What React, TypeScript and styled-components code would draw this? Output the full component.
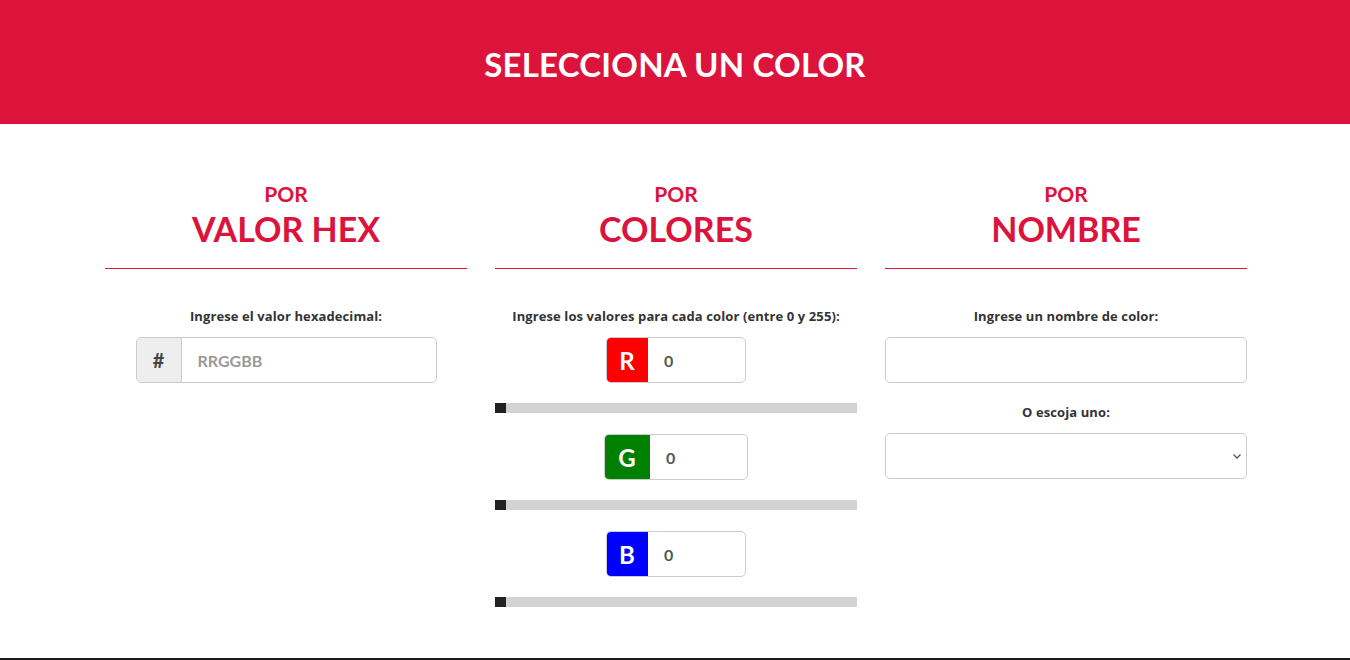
import React from "react";
import styled, { createGlobalStyle } from "styled-components";

const Global = createGlobalStyle`
  html, body { margin: 0; padding: 0; background: #fff; }
  body { font-family: Lato, "Open Sans", sans-serif; }
  * { box-sizing: border-box; }
`;

const CRIMSON = "#dc143c";

const Header = styled.header`
  height: 124px;
  background: ${CRIMSON};
  display: flex;
  align-items: center;
  justify-content: center;
`;

const Title = styled.h1`
  margin: 0;
  color: #fff;
  font-family: Lato, sans-serif;
  font-weight: 700;
  font-size: 33px;
  letter-spacing: 0.2px;
  line-height: 1;
  padding-top: 4px;
`;

const Main = styled.main`
  display: grid;
  grid-template-columns: repeat(3, 362px);
  column-gap: 28px;
  justify-content: center;
  padding: 58px 0 51px 2px;
  align-items: start;
`;

const Column = styled.section`
  display: flex;
  flex-direction: column;
  align-items: center;
`;

const ColumnHead = styled.div`
  width: 100%;
  text-align: center;
  color: ${CRIMSON};
  font-weight: 700;
  border-bottom: 1px solid ${CRIMSON};
  padding-bottom: 19px;
`;

const Small = styled.div`
  font-size: 21px;
  line-height: 24px;
`;

const Big = styled.div`
  font-size: 34px;
  line-height: 40px;
  margin-top: 3px;
`;

const Label = styled.label<{ $top?: number }>`
  display: block;
  margin-top: ${(p) => p.$top ?? 38}px;
  margin-bottom: 12px;
  font-family: "Open Sans", Lato, sans-serif;
  font-size: 13px;
  line-height: 18px;
  font-weight: 700;
  letter-spacing: 0.1px;
  color: #333;
  text-align: center;
`;

const Group = styled.div<{ $width: number }>`
  display: flex;
  width: ${(p) => p.$width}px;
  height: 46px;
  border: 1px solid #ccc;
  border-radius: 5px;
  overflow: hidden;
  background: #fff;
`;

const Addon = styled.span<{ $bg: string; $fg: string; $w: number }>`
  flex: 0 0 ${(p) => p.$w}px;
  display: flex;
  align-items: center;
  justify-content: center;
  background: ${(p) => p.$bg};
  color: ${(p) => p.$fg};
  font-weight: 700;
  font-size: ${(p) => (p.$fg === "#fff" ? 24 : 20)}px;
  border-right: 1px solid ${(p) => (p.$fg === "#fff" ? "transparent" : "#ccc")};
`;

const Field = styled.input`
  flex: 1;
  min-width: 0;
  border: none;
  outline: none;
  padding: 0 16px;
  font-family: Lato, sans-serif;
  font-weight: 700;
  font-size: 16px;
  color: #555;
  background: transparent;
  &::placeholder { color: #999; }
`;

const RgbBlock = styled.div`
  width: 100%;
  display: flex;
  flex-direction: column;
  align-items: center;
`;

const Track = styled.div<{ $mb: number }>`
  width: 100%;
  height: 10px;
  background: #d3d3d3;
  margin-top: 20px;
  margin-bottom: ${(p) => p.$mb}px;
  display: flex;
`;

const Thumb = styled.span`
  width: 11px;
  height: 10px;
  background: #222;
`;

const FullBox = styled.input`
  width: 100%;
  height: 46px;
  border: 1px solid #ccc;
  border-radius: 5px;
  outline: none;
  padding: 0 12px;
  font-family: Lato, sans-serif;
  font-size: 16px;
`;

const SelectWrap = styled.div`
  position: relative;
  width: 100%;
`;

const Select = styled.select`
  width: 100%;
  height: 46px;
  border: 1px solid #ccc;
  border-radius: 5px;
  appearance: none;
  background: #fff;
  outline: none;
  padding: 0 12px;
  font-family: Lato, sans-serif;
  font-size: 16px;
`;

const Chevron = styled.svg`
  position: absolute;
  right: 5px;
  top: 19px;
  pointer-events: none;
`;

const Footer = styled.footer`
  height: 40px;
  background: #1b1b1b;
`;

const channels = [
  { letter: "R", bg: "#ff0000", w: 140, addon: 41 },
  { letter: "G", bg: "#008000", w: 144, addon: 45 },
  { letter: "B", bg: "#0000ff", w: 140, addon: 41 },
];

export default function App() {
  return (
    <>
      <Global />
      <Header>
        <Title>SELECCIONA UN COLOR</Title>
      </Header>
      <Main>
        <Column>
          <ColumnHead>
            <Small>POR</Small>
            <Big>VALOR HEX</Big>
          </ColumnHead>
          <Label>Ingrese el valor hexadecimal:</Label>
          <Group $width={301}>
            <Addon $bg="#eee" $fg="#444" $w={45}>#</Addon>
            <Field placeholder="RRGGBB" />
          </Group>
        </Column>
        <Column>
          <ColumnHead>
            <Small>POR</Small>
            <Big>COLORES</Big>
          </ColumnHead>
          <Label>Ingrese los valores para cada color (entre 0 y 255):</Label>
          <RgbBlock>
            {channels.map((c, i) => (
              <React.Fragment key={c.letter}>
                <Group $width={c.w}>
                  <Addon $bg={c.bg} $fg="#fff" $w={c.addon}>{c.letter}</Addon>
                  <Field defaultValue="0" />
                </Group>
                <Track $mb={i < 2 ? 21 : 0}>
                  <Thumb />
                </Track>
              </React.Fragment>
            ))}
          </RgbBlock>
        </Column>
        <Column>
          <ColumnHead>
            <Small>POR</Small>
            <Big>NOMBRE</Big>
          </ColumnHead>
          <Label>Ingrese un nombre de color:</Label>
          <FullBox />
          <Label $top={20}>O escoja uno:</Label>
          <SelectWrap>
            <Select defaultValue="">
              <option value=""></option>
            </Select>
            <Chevron width="10" height="8" viewBox="0 0 10 8">
              <path d="M1.5 2.5 L5 6 L8.5 2.5" fill="none" stroke="#555" strokeWidth="1.3" />
            </Chevron>
          </SelectWrap>
        </Column>
      </Main>
      <Footer />
    </>
  );
}
